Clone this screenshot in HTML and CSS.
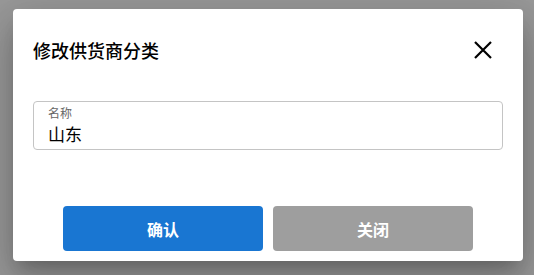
FILE: index.html
```html
<!DOCTYPE html>
<html lang="zh-CN">
<head>
<meta charset="utf-8">
<title>修改供货商分类</title>
<link rel="stylesheet" href="styles.css">
</head>
<body>
<div class="dialog">
  <div class="dialog-header">
    <h2 class="dialog-title">修改供货商分类</h2>
    <button class="close-btn" aria-label="关闭">
      <svg width="20" height="20" viewBox="0 0 20 20"><path d="M2 2 L18 18 M18 2 L2 18" stroke="#000" stroke-width="2.2" fill="none"/></svg>
    </button>
  </div>
  <div class="dialog-body">
    <div class="field">
      <span class="field-label">名称</span>
      <span class="field-value">山东</span>
    </div>
  </div>
  <div class="dialog-actions">
    <button class="btn btn-primary">确认</button>
    <button class="btn btn-secondary">关闭</button>
  </div>
</div>
</body>
</html>
```
FILE: styles.css
```css
* { box-sizing: border-box; }
html, body {
  margin: 0;
  height: 275px;
  overflow: hidden;
}
body {
  background: #999999;
  font-family: "Noto Sans CJK SC", "Noto Sans", sans-serif;
  padding: 9px 11px 0 13px;
}
.dialog {
  width: 510px;
  height: 252px;
  background: #fff;
  border-radius: 4px;
  box-shadow: 0 11px 15px -7px rgba(0,0,0,0.2), 0 24px 38px 3px rgba(0,0,0,0.14), 0 9px 46px 8px rgba(0,0,0,0.12);
  display: flex;
  flex-direction: column;
  padding: 0 20px 10px;
}
.dialog-header {
  display: flex;
  align-items: center;
  justify-content: space-between;
  height: 82px;
}
.dialog-title {
  margin: 0;
  font-size: 18px;
  font-weight: 500;
  color: #000;
  line-height: 24px;
}
.close-btn {
  border: none;
  background: transparent;
  padding: 0;
  width: 20px;
  height: 20px;
  margin-right: 10px;
  display: flex;
  align-items: center;
  justify-content: center;
  cursor: pointer;
}
.dialog-body {
  padding-top: 10px;
}
.field {
  height: 49px;
  border: 1px solid #c4c4c4;
  border-radius: 4px;
  padding: 4px 14px 0;
  display: flex;
  flex-direction: column;
  gap: 3px;
}
.field-label {
  font-size: 12px;
  line-height: 14px;
  color: #666;
}
.field-value {
  font-size: 17px;
  line-height: 22px;
  color: #000;
}
.dialog-actions {
  margin-top: auto;
  display: flex;
  justify-content: center;
  gap: 10px;
}
.btn {
  width: 200px;
  height: 45px;
  border: none;
  border-radius: 4px;
  color: #fff;
  font-family: "Noto Sans CJK SC", "Noto Sans", sans-serif;
  font-size: 16px;
  font-weight: 700;
  cursor: pointer;
}
.btn-primary { background: #1976d2; }
.btn-secondary { background: #9e9e9e; }
```
